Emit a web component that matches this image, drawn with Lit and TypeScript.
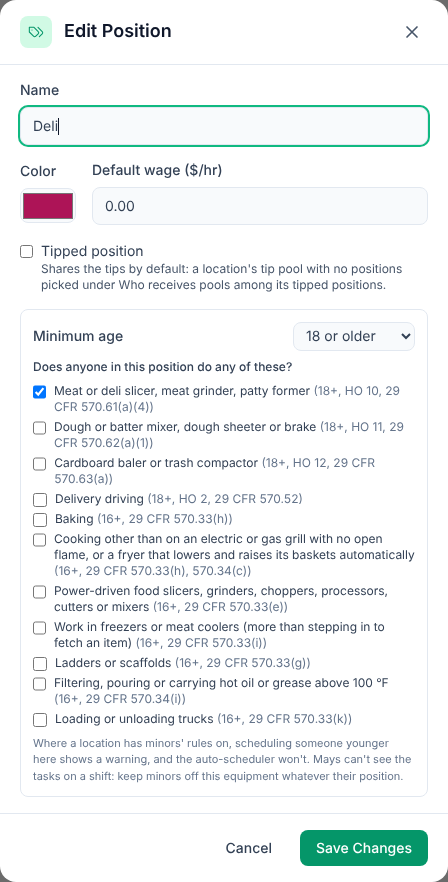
import { LitElement, html, css } from "lit";
import { customElement } from "lit/decorators.js";

const tasks: [string, string, boolean?][] = [
  ["Meat or deli slicer, meat grinder, patty former", "(18+, HO 10, 29 CFR 570.61(a)(4))", true],
  ["Dough or batter mixer, dough sheeter or brake", "(18+, HO 11, 29 CFR 570.62(a)(1))"],
  ["Cardboard baler or trash compactor", "(18+, HO 12, 29 CFR 570.63(a))"],
  ["Delivery driving", "(18+, HO 2, 29 CFR 570.52)"],
  ["Baking", "(16+, 29 CFR 570.33(h))"],
  ["Cooking other than on an electric or gas grill with no open flame, or a fryer that lowers and raises its baskets automatically", "(16+, 29 CFR 570.33(h), 570.34(c))"],
  ["Power-driven food slicers, grinders, choppers, processors, cutters or mixers", "(16+, 29 CFR 570.33(e))"],
  ["Work in freezers or meat coolers (more than stepping in to fetch an item)", "(16+, 29 CFR 570.33(i))"],
  ["Ladders or scaffolds", "(16+, 29 CFR 570.33(g))"],
  ["Filtering, pouring or carrying hot oil or grease above 100 °F", "(16+, 29 CFR 570.34(i))"],
  ["Loading or unloading trucks", "(16+, 29 CFR 570.33(k))"],
];

@customElement("app-root")
export class AppRoot extends LitElement {
  static styles = css`
    :host { display: block; width: 448px; height: 882px; background: #6b6b6b; font-family: Inter, "Liberation Sans", sans-serif; color: #334155; text-rendering: geometricPrecision; }
    * { box-sizing: border-box; font-family: inherit; text-rendering: inherit; }
    .modal { width: 448px; height: 882px; background: #fff; border-radius: 16px; display: flex; flex-direction: column; overflow: hidden; will-change: transform; }
    .head { height: 65px; flex: none; border-bottom: 1px solid #e2e8f0; display: flex; align-items: center; padding: 0 20px; gap: 12px; }
    .badge { width: 32px; height: 32px; border-radius: 8px; background: #d1fae5; display: flex; align-items: center; justify-content: center; color: #059669; }
    h2 { margin: 0; flex: 1; font-size: 18px; line-height: 28px; font-weight: 600; color: #0f172a; }
    .close { width: 20px; height: 20px; color: #475569; display: flex; margin-right: 6px; }
    .body { flex: 1; padding: 16px 20px 0; display: flex; flex-direction: column; min-height: 0; }
    .l { display: block; font-size: 14px; line-height: 20px; font-weight: 500; color: #334155; }
    .text { display: block; width: 100%; height: 38px; border: 1px solid #e2e8f0; border-radius: 8px; background: #f8fafc; padding: 0 12px; font-size: 14px; color: #334155; outline: none; margin-top: 6px; }
    .name { display: flex; align-items: center; box-shadow: 0 0 0 2px #10b981; }
    .caret { display: inline-block; width: 1px; height: 17px; background: #0f172a; }
    .row { display: flex; gap: 16px; margin-top: 16px; }
    .colr { width: 56px; }
    .colr .l { margin-top: 1px; }
    .swatch { margin-top: 6px; width: 56px; height: 35px; border: 1px solid #e2e8f0; border-radius: 8px; background: #f8fafc; padding: 4px 2px 3px; display: flex; }
    .swatch i { display: block; flex: 1; background: #ad1457; border: 1px solid #767676; }
    .wage { flex: 1; }
    .tip { display: flex; gap: 8px; margin-top: 17px; }
    input[type=checkbox] { margin: 0; width: 14px; height: 14px; min-width: 13px; accent-color: #0075ff; }
    .tip input { margin-top: 3px; width: 13px; height: 13px; }
    .tipname { font-size: 14px; line-height: 20px; color: #334155; }
    .hint { font-size: 12px; line-height: 16px; color: #475569; margin-top: -1px; }
    .box { margin-top: 16px; border: 1px solid #e2e8f0; border-radius: 8px; padding: 12px; }
    .agerow { display: flex; justify-content: space-between; align-items: center; }
    .agerow span { font-size: 14px; font-weight: 500; }
    select { width: 122px; height: 29px; border: 1px solid #e2e8f0; border-radius: 8px; background-color: #f8fafc; color: #334155; font-size: 14px; padding: 0 8px; }
    .q { margin-top: 8px; font-size: 12px; line-height: 16px; font-weight: 500; color: #334155; }
    .list { margin-top: 8px; display: flex; flex-direction: column; gap: 4px; }
    .task { display: flex; gap: 8px; font-size: 12px; line-height: 16px; color: #334155; }
    .task input { margin-top: 2px; }
    .task em { font-style: normal; color: #64748b; }
    .note { margin-top: 7.5px; font-size: 11px; line-height: 16.5px; color: #64748b; }
    .foot { height: 69px; flex: none; border-top: 1px solid #e2e8f0; display: flex; justify-content: flex-end; align-items: center; gap: 12px; padding: 0 20px; }
    button { border: none; background: none; font-size: 14px; font-weight: 500; height: 36px; border-radius: 8px; }
    .cancel { color: #334155; padding: 0 16px; }
    .save { background: #059669; color: #fff; padding: 0 16px; }
  `;
  render() {
    return html`<div class="modal">
      <div class="head">
        <div class="badge"><svg width="16" height="16" viewBox="0 0 24 24" fill="none" stroke="currentColor" stroke-width="1.6" stroke-linecap="round" stroke-linejoin="round"><path d="M9 5H2v7l6.29 6.29c.94.94 2.48.94 3.42 0l3.58-3.58c.94-.94.94-2.48 0-3.42L9 5Z"/><path d="M6 9.01V9"/><path d="m15 5 6.3 6.3a2.4 2.4 0 0 1 0 3.4L17 19"/></svg></div>
        <h2>Edit Position</h2>
        <div class="close"><svg width="20" height="20" viewBox="0 0 24 24" fill="none" stroke="currentColor" stroke-width="2" stroke-linecap="round"><path d="M18 6 6 18M6 6l12 12"/></svg></div>
      </div>
      <div class="body">
        <div class="l">Name</div>
        <div class="text name"><span>Deli</span><span class="caret"></span></div>
        <div class="row">
          <div class="colr"><div class="l">Color</div><div class="swatch"><i></i></div></div>
          <div class="wage"><div class="l">Default wage ($/hr)</div><input class="text" value="0.00" /></div>
        </div>
        <div class="tip"><input type="checkbox" /><div><div class="tipname">Tipped position</div><div class="hint">Shares the tips by default: a location's tip pool with no positions picked under Who receives pools among its tipped positions.</div></div></div>
        <div class="box">
          <div class="agerow"><span>Minimum age</span><select><option>18 or older</option></select></div>
          <div class="q">Does anyone in this position do any of these?</div>
          <div class="list">
            ${tasks.map(([a, b, c]) => html`<label class="task"><input type="checkbox" ?checked=${!!c} /><span>${a} <em>${b}</em></span></label>`)}
          </div>
          <div class="note">Where a location has minors' rules on, scheduling someone younger here shows a warning, and the auto-scheduler won't. Mays can't see the tasks on a shift: keep minors off this equipment whatever their position.</div>
        </div>
      </div>
      <div class="foot"><button class="cancel">Cancel</button><button class="save">Save Changes</button></div>
    </div>`;
  }
}
